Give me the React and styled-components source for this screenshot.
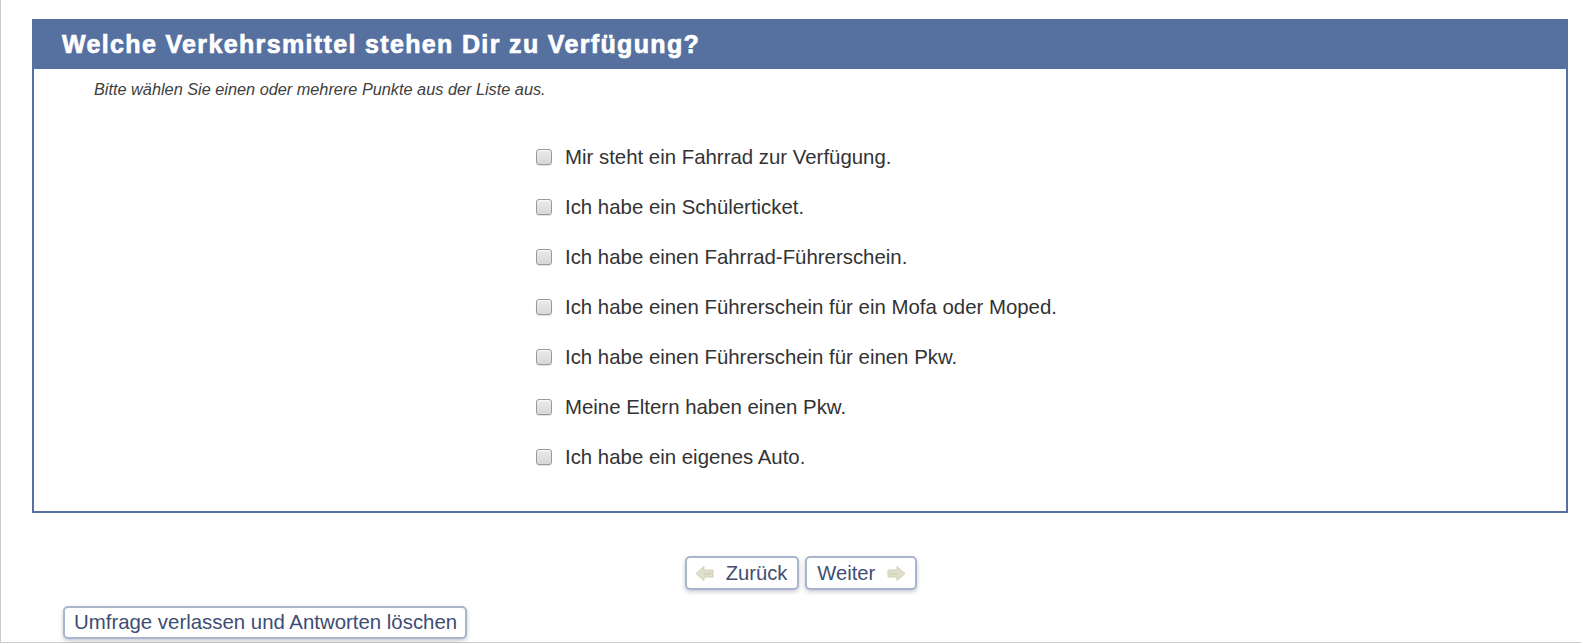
import React from "react";
import styled, { createGlobalStyle } from "styled-components";

const GlobalStyle = createGlobalStyle`
  html, body {
    margin: 0;
    padding: 0;
    background: #ffffff;
  }
  body {
    font-family: "Liberation Sans", Arial, sans-serif;
  }
  * { box-sizing: border-box; }
`;

const Frame = styled.div`
  width: 1581px;
  height: 643px;
  border-left: 1px solid #cdcdcd;
  border-bottom: 1px solid #cdcdcd;
  padding: 19px 0 0 31px;
  display: flex;
  flex-direction: column;
  align-items: flex-start;
`;

const Panel = styled.section`
  width: 1536px;
  display: flex;
  flex-direction: column;
`;

const Header = styled.div`
  height: 50px;
  background: #5670a0;
  display: flex;
  align-items: center;
  padding: 1px 0 0 30px;
`;

const Title = styled.h1`
  margin: 0;
  color: #ffffff;
  font-family: "Liberation Sans", Arial, sans-serif;
  font-weight: 700;
  font-size: 25px;
  letter-spacing: 1.35px;
  -webkit-text-stroke: 0.7px #ffffff;
`;

const Body = styled.div`
  height: 444px;
  border: 2px solid #5670a0;
  border-top: none;
  display: flex;
  flex-direction: column;
  padding: 11px 0 0 60px;
`;

const Hint = styled.p`
  margin: 0;
  font-style: italic;
  font-size: 16.3px;
  line-height: 18px;
  color: #404040;
`;

const List = styled.div`
  display: flex;
  flex-direction: column;
  margin: 35px 0 0 442px;
`;

const Row = styled.label`
  height: 49.9px;
  display: flex;
  align-items: center;
  gap: 13px;
  font-size: 20.4px;
  color: #333333;
  cursor: pointer;
`;

const Box = styled.span`
  width: 16px;
  height: 16px;
  flex: none;
  border: 1px solid #989898;
  border-radius: 3px;
  background: linear-gradient(#ebebeb, #d8d8d8);
  box-shadow: inset 0 1px 1px rgba(255, 255, 255, 0.8), 0 1px 1px rgba(0, 0, 0, 0.12);
  margin-top: -1px;
`;

const Nav = styled.div`
  width: 1536px;
  display: flex;
  justify-content: center;
  gap: 6px;
  margin-top: 43px;
  padding-left: 2px;
`;

const Button = styled.button`
  height: 34px;
  display: flex;
  align-items: center;
  gap: ${(p) => (p.$gap ? p.$gap : "0px")};
  padding: 0 ${(p) => p.$pr || "10px"} 0 ${(p) => p.$pl || "10px"};
  border: 2px solid #a9b5cd;
  border-radius: 5px;
  background: #ffffff;
  box-shadow: 0 2px 4px rgba(60, 70, 100, 0.28);
  font-family: "Liberation Sans", Arial, sans-serif;
  font-size: 20.2px;
  color: #3e4d74;
  cursor: pointer;
`;

const LeaveButton = styled(Button)`
  margin: 16px 0 0 31px;
  height: 33px;
  padding: 0 8px 0 9px;
  font-size: 20.4px;
`;

const Arrow = ({ dir }) => (
  <svg width="19" height="17" viewBox="0 0 19 17" style={{ transform: dir === "right" ? "scaleX(-1)" : "none" }}>
    <path
      d="M1 8.5 L9 1.5 L9 5 L18 5 L18 12 L9 12 L9 15.5 Z"
      fill="#e0dfcb"
      stroke="#d0cfb8"
      strokeWidth="1"
      strokeLinejoin="round"
    />
    <path d="M9 9 L15 9 L15 7" fill="none" stroke="#c9c8b1" strokeWidth="1" />
  </svg>
);

const options = [
  "Mir steht ein Fahrrad zur Verfügung.",
  "Ich habe ein Schülerticket.",
  "Ich habe einen Fahrrad-Führerschein.",
  "Ich habe einen Führerschein für ein Mofa oder Moped.",
  "Ich habe einen Führerschein für einen Pkw.",
  "Meine Eltern haben einen Pkw.",
  "Ich habe ein eigenes Auto.",
];

export default function App() {
  return (
    <>
      <GlobalStyle />
      <Frame>
        <Panel>
          <Header>
            <Title>Welche Verkehrsmittel stehen Dir zu Verfügung?</Title>
          </Header>
          <Body>
            <Hint>Bitte wählen Sie einen oder mehrere Punkte aus der Liste aus.</Hint>
            <List>
              {options.map((o) => (
                <Row key={o}>
                  <Box />
                  <span>{o}</span>
                </Row>
              ))}
            </List>
          </Body>
        </Panel>
        <Nav>
          <Button $pl="8px" $pr="10px" $gap="12px">
            <Arrow dir="left" />
            Zurück
          </Button>
          <Button $pl="10px" $pr="9px" $gap="12px">
            Weiter
            <Arrow dir="right" />
          </Button>
        </Nav>
        <LeaveButton>Umfrage verlassen und Antworten löschen</LeaveButton>
      </Frame>
    </>
  );
}
